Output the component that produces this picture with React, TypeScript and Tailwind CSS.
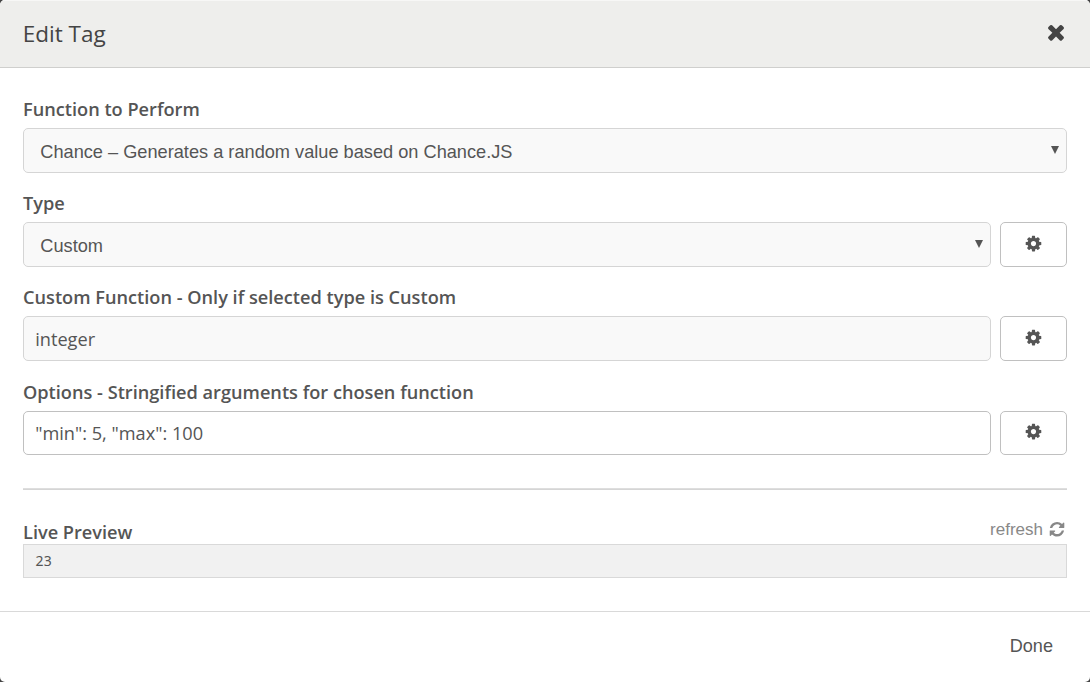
import React from "react";

const COG =
  "M1152 896q0-106-75-181t-181-75-181 75-75 181 75 181 181 75 181-75 75-181zm512-109v222q0 12-8 23t-20 13l-185 28q-19 54-39 91 35 50 107 138 10 12 10 25t-9 23q-27 37-99 108t-94 71q-12 0-26-9l-138-108q-44 23-91 38-16 136-29 186-7 28-36 28h-222q-14 0-24.500-8.500t-11.500-21.500l-28-184q-49-16-90-37l-141 107q-10 9-25 9-14 0-25-11-126-114-165-168-7-10-7-23 0-12 8-23 15-21 51-66.500t54-70.500q-27-50-41-99l-183-27q-13-2-21-12.500t-8-23.500v-222q0-12 8-23t19-13l186-28q14-46 39-92-40-57-107-138-10-12-10-24 0-10 9-23 26-36 98.500-107.500t94.500-71.500q13 0 26 10l138 107q44-23 91-38 16-136 29-186 7-28 36-28h222q14 0 24.500 8.500t11.500 21.500l28 184q49 16 90 37l142-107q9-9 24-9 13 0 25 10 129 119 165 170 7 8 7 22 0 12-8 23-15 21-51 66.500t-54 70.500q26 50 41 98l183 28q13 2 21 12.500t8 23.500z";
const TIMES =
  "M1490 1322q0 40-28 68l-136 136q-28 28-68 28t-68-28l-294-294-294 294q-28 28-68 28t-68-28l-136-136q-28-28-28-68t28-68l294-294-294-294q-28-28-28-68t28-68l136-136q28-28 68-28t68 28l294 294 294-294q28-28 68-28t68 28l136 136q28 28 28 68t-28 68l-294 294 294 294q28 28 28 68z";
const REFRESH =
  "M1639 1056q0 5-1 7-64 268-268 434.500t-478 166.500q-146 0-282.500-55t-243.500-157l-129 129q-19 19-45 19t-45-19-19-45v-448q0-26 19-45t45-19h448q26 0 45 19t19 45-19 45l-137 137q71 66 161 102t187 36q134 0 250-65t186-179q11-17 53-117 8-23 30-23h192q13 0 22.500 9.500t9.500 22.500zm25-800v448q0 26-19 45t-45 19h-448q-26 0-45-19t-19-45 19-45l138-138q-148-137-349-137-134 0-250 65t-186 179q-11 17-53 117-8 23-30 23h-199q-13 0-22.500-9.500t-9.500-22.500v-7q65-268 270-434.500t480-166.500q146 0 284 55.500t245 156.500l130-129q19-19 45-19t45 19 19 45z";

function Icon({ d, className }: { d: string; className: string }) {
  return (
    <svg viewBox="0 0 1792 1792" fill="currentColor" aria-hidden="true" className={className}>
      <path d={d} />
    </svg>
  );
}

function Label({ children }: { children: React.ReactNode }) {
  return <div className="h-[25px] text-[18.18px] leading-[25px] font-semibold whitespace-nowrap">{children}</div>;
}

function SelectBox({ value }: { value: string }) {
  return (
    <button
      type="button"
      className="flex h-[45px] min-w-0 grow items-center justify-between rounded-[5px] border border-[#d5d5d5] bg-[#f9f9f9] pr-[7px] pl-[16.3px] font-['Liberation_Sans',Arial,sans-serif] text-[18.2px]"
    >
      <span className="pt-[3px] leading-[26px]">{value}</span>
      <svg viewBox="0 0 8 8" fill="currentColor" className="mb-[2px] size-2" aria-hidden="true">
        <path d="M0 0h8L4 8z" />
      </svg>
    </button>
  );
}

function CogButton({ className }: { className: string }) {
  return (
    <button
      type="button"
      aria-label="Settings"
      className={`flex w-[67px] shrink-0 items-start justify-center rounded-[5px] border border-[#c0c0c0] bg-white ${className}`}
    >
      <svg viewBox="0 0 18 18" fill="currentColor" aria-hidden="true" className="mr-px size-[18px]">
        <path d={COG} transform="translate(0.4 -0.5) scale(0.010145)" />
      </svg>
    </button>
  );
}

export default function App() {
  return (
    <div className="h-[682px] w-full overflow-hidden bg-[#444]">
      <div className="flex h-full flex-col overflow-hidden rounded-[5px] bg-white font-['Open_Sans',sans-serif] text-[#555]">
        <header className="flex h-[68px] shrink-0 items-center justify-between border-t border-b border-t-[#f7f7f6] border-b-[#cfcfcd] bg-[#eeeeec] pr-[22px] pl-[22.7px] text-[#444]">
          <h1 className="text-[22.5px] leading-8">Edit Tag</h1>
          <button type="button" aria-label="Close" className="pb-[4px]">
            <Icon d={TIMES} className="size-6" />
          </button>
        </header>

        <main className="flex h-[543px] shrink-0 flex-col px-[23px] pt-[29px]">
          <Label>Function to Perform</Label>
          <div className="mt-[6px] flex">
            <SelectBox value="Chance – Generates a random value based on Chance.JS" />
          </div>

          <div className="mt-[18px]">
            <Label>Type</Label>
          </div>
          <div className="mt-[6px] flex gap-[9px]">
            <SelectBox value="Custom" />
            <CogButton className="h-[45px] pt-[12px]" />
          </div>

          <div className="mt-[18px]">
            <Label>Custom Function - Only if selected type is Custom</Label>
          </div>
          <div className="mt-[6px] flex gap-[9px]">
            <div className="flex h-[45px] grow items-center rounded-[5px] border border-[#d5d5d5] bg-[#f9f9f9] px-[11.2px] pt-[3px] text-[18.18px]">
              integer
            </div>
            <CogButton className="h-[45px] pt-[12px]" />
          </div>

          <div className="mt-[19px]">
            <Label>Options - Stringified arguments for chosen function</Label>
          </div>
          <div className="mt-[6px] flex gap-[9px]">
            <div className="flex h-[44px] grow items-center rounded-[5px] border border-[#c0c0c0] bg-white px-[11.2px] pt-[2px] text-[18.18px]">
              "min": 5, "max": 100
            </div>
            <CogButton className="h-[44px] pt-[11px]" />
          </div>

          <hr className="mt-[33px] h-[2px] border-t border-b border-t-[#dedede] border-b-[#d5d5d5]" />

          <div className="mt-[30px] flex h-[24px] items-start justify-between">
            <Label>Live Preview</Label>
            <button
              type="button"
              className="flex h-[20px] items-center gap-[6px] pr-px font-['Liberation_Sans',Arial,sans-serif] text-[17px] leading-5 text-[#888]"
            >
              refresh
              <svg viewBox="0 0 17 17" fill="currentColor" aria-hidden="true" className="mb-[2px] size-[17px]">
                <path d={REFRESH} transform="translate(-0.5 -0.3) scale(0.0095)" />
              </svg>
            </button>
          </div>
          <div className="flex h-[34px] shrink-0 items-center border border-[#d9d9d9] bg-[#f1f1f1] px-[11.4px] pb-[2px] font-['Noto_Sans',sans-serif] text-[14px] tracking-[0.4px]">
            23
          </div>
        </main>

        <footer className="flex h-[71px] shrink-0 items-center justify-end border-t border-[#d9d9d9] pr-[37px] pb-[3px] font-['Liberation_Sans',Arial,sans-serif] text-[18.1px]">
          <button type="button" className="leading-[26px]">Done</button>
        </footer>
      </div>
    </div>
  );
}
